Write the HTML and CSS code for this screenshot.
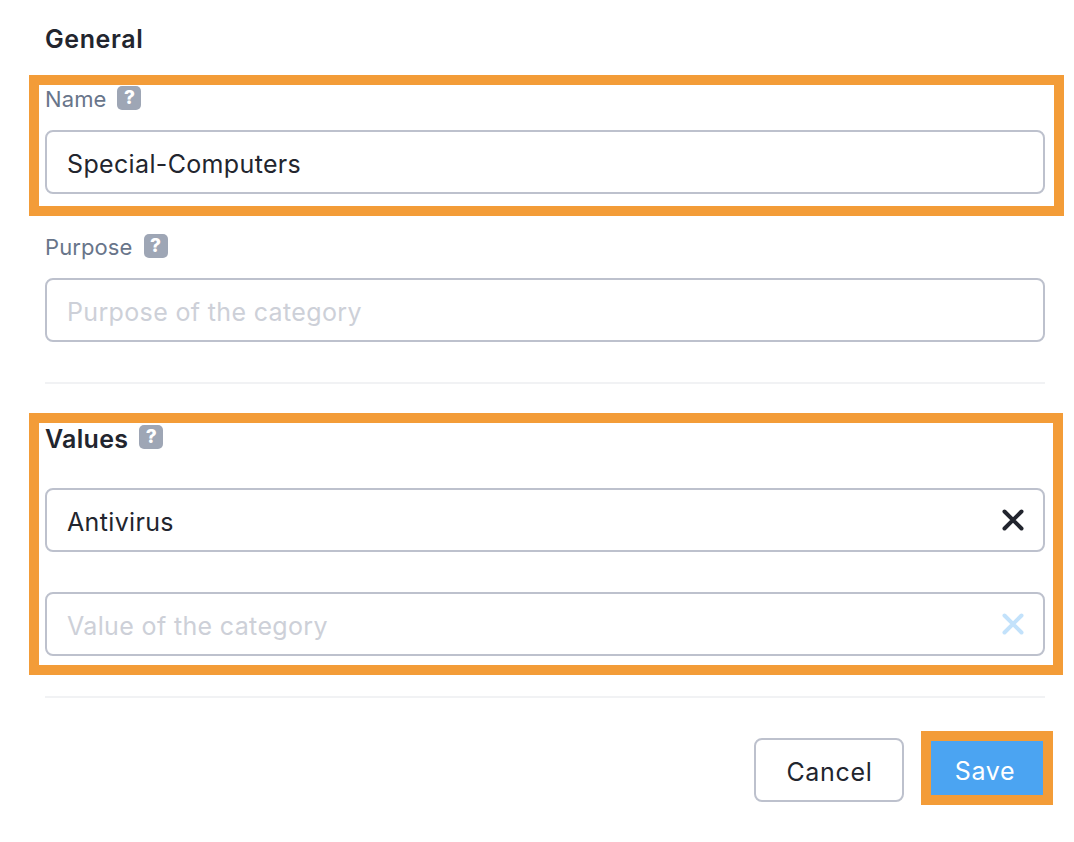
FILE: index.html
```html
<!DOCTYPE html>
<html lang="en">
<head>
<meta charset="utf-8">
<title>Category</title>
<link rel="stylesheet" href="styles.css">
</head>
<body>
<main class="page">
  <h2 class="heading heading-general">General</h2>
  <div class="field field-name">
    <label class="label">Name <span class="help">?</span></label>
    <div class="input"><span class="value">Special-Computers</span></div>
  </div>
  <div class="field field-purpose">
    <label class="label">Purpose <span class="help">?</span></label>
    <div class="input"><span class="placeholder">Purpose of the category</span></div>
  </div>
  <hr class="divider divider-first">
  <h2 class="heading heading-values">Values <span class="help">?</span></h2>
  <div class="input input-antivirus">
    <span class="value">Antivirus</span>
    <svg class="clear" viewBox="0 0 22 22"><path d="M2.5 2.5 19.5 19.5M19.5 2.5 2.5 19.5"/></svg>
  </div>
  <div class="input input-empty">
    <span class="placeholder">Value of the category</span>
    <svg class="clear clear-faint" viewBox="0 0 22 22"><path d="M2.5 2.5 19.5 19.5M19.5 2.5 2.5 19.5"/></svg>
  </div>
  <hr class="divider divider-second">
  <div class="actions">
    <button class="btn btn-cancel">Cancel</button>
    <button class="btn btn-save">Save</button>
  </div>
  <div class="mark mark-name"></div>
  <div class="mark mark-values"></div>
</main>
</body>
</html>
```

FILE: styles.css
```css
* { box-sizing: border-box; }
html, body { margin: 0; background: #fff; }
body { font-family: Inter, Lato, sans-serif; color: #22252e; }
.page { position: relative; width: 1074px; height: 842px; padding: 0 29px 0 45px; overflow: hidden; }
.heading { margin: 0; font-size: 25px; line-height: 30px; font-weight: 600; letter-spacing: .3px; color: #22252e; display: flex; align-items: center; }
.heading-general { padding-top: 24px; height: 53px; letter-spacing: .6px; }
.heading-values { height: 30px; margin-top: 40px; }
.heading-values .help { margin-left: 11px; margin-top: -4px; letter-spacing: 0; }
.field-name { margin-top: 31px; }
.field-purpose { margin-top: 38px; }
.label { display: flex; align-items: center; height: 30px; font-size: 22px; line-height: 30px; letter-spacing: .1px; color: #68758a; margin-bottom: 16px; }
.help { display: inline-flex; align-items: center; justify-content: center; width: 24px; height: 24px; margin-left: 11px; margin-top: -2px; border-radius: 5px; background: #9ea6b5; color: #fff; font-size: 19px; font-weight: 800; line-height: 24px; letter-spacing: 0; }
.input { display: flex; align-items: center; justify-content: space-between; height: 64px; padding: 4px 19px 0 20px; border: 2px solid #bdc1cd; border-radius: 8px; background: #fff; font-size: 25px; letter-spacing: .35px; }
.value { color: #22252e; }
.placeholder { color: #cdd0d8; }
.divider { height: 2px; margin: 0; border: 0; background: #f1f2f4; }
.divider-first { margin-top: 40px; }
.divider-second { margin-top: 40px; }
.input-antivirus { margin-top: 34px; }
.input-empty { margin-top: 40px; }
.clear { width: 22px; height: 22px; margin-top: -4px; fill: none; stroke: #22252e; stroke-width: 4; stroke-linecap: round; }
.clear-faint { stroke: #c3e2fb; }
.actions { display: flex; justify-content: flex-end; gap: 27px; margin-top: 40px; margin-right: 2px; }
.btn { height: 64px; border-radius: 8px; font: inherit; font-size: 25px; letter-spacing: .7px; padding: 4px 0 0 1px; }
.btn-cancel { width: 150px; background: #fff; border: 2px solid #bdc1cd; color: #22252e; }
.btn-save { width: 112px; height: 54px; margin-top: 3px; padding: 6px 4px 0 0; background: #4ba4f2; border: 0; border-radius: 0; color: #fff; outline: 10px solid #f39c38; }
.mark { position: absolute; left: 29px; border: 10px solid #f39c38; pointer-events: none; }
.mark-name { top: 75px; width: 1035px; height: 141px; }
.mark-values { top: 413px; width: 1034px; height: 262px; }
```
